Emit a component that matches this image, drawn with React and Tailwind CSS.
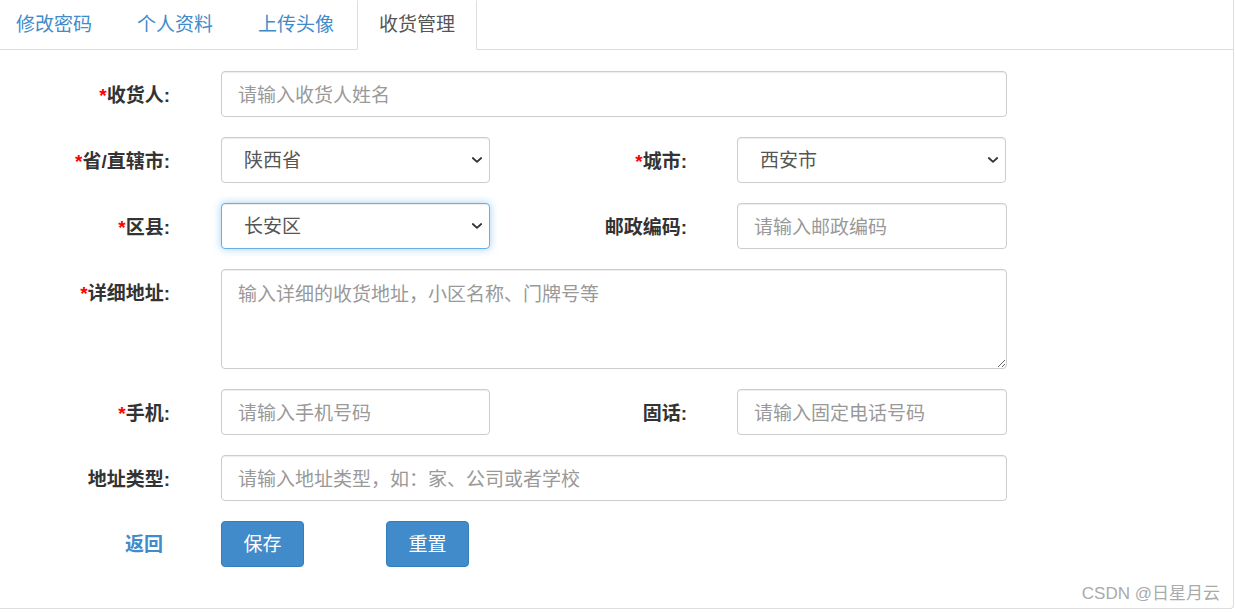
import React from 'react';

const tabs = ['修改密码', '个人资料', '上传头像', '收货管理'];

const inputCls =
  'h-[46px] border border-[#ccc] rounded-[4px] px-[16px] pt-[3px] text-[19px] text-[#555] bg-white outline-none placeholder:text-[#999] shadow-[inset_0_1px_1px_rgba(0,0,0,0.075)]';

const Label = ({ required, children, className = 'w-[170px]' }) => (
  <label className={`${className} shrink-0 text-right font-bold text-[19px] leading-[50px] text-[#333]`}>
    {required && <span className="text-[#f00]">*</span>}
    {children}:
  </label>
);

const Select = ({ value, focused }) => (
  <div className="relative w-[269px] shrink-0">
    <select
      defaultValue={value}
      className={`w-full h-[46px] appearance-none rounded-[4px] pl-[22px] pr-8 pt-[3px] text-[19px] text-[#555] bg-white outline-none border ${
        focused
          ? 'border-[#66afe9] shadow-[inset_0_1px_1px_rgba(0,0,0,0.075),0_0_8px_rgba(102,175,233,0.6)]'
          : 'border-[#ccc] shadow-[inset_0_1px_1px_rgba(0,0,0,0.075)]'
      }`}
    >
      <option>{value}</option>
    </select>
    <svg
      className="absolute right-[7px] top-1/2 -translate-y-1/2 pointer-events-none"
      width="12"
      height="8"
      viewBox="0 0 12 8"
      fill="none"
    >
      <path d="M1.8 2 L6 5.8 L10.2 2" stroke="#333" strokeWidth="1.8" strokeLinecap="round" strokeLinejoin="round" />
    </svg>
  </div>
);

export default function App() {
  return (
    <div className="w-[1234px] h-[609px] bg-white relative border-r border-b border-[#ddd] rounded-br-[4px] font-['Liberation_Sans','Noto_Sans_CJK_SC',sans-serif] overflow-hidden">
      {/* tabs */}
      <ul className="flex h-[50px] border-b border-[#ddd] ml-[-6px]">
        {tabs.map((t, i) => {
          const active = i === tabs.length - 1;
          return (
            <li key={t} className="-mb-px mr-[1px]">
              <a
                href="#"
                className={`block h-[50px] px-[21px] leading-[48px] text-[19px] border ${
                  active
                    ? 'border-[#ddd] border-b-white border-t-transparent bg-white text-[#555]'
                    : 'border-transparent text-[#428bca]'
                }`}
              >
                {t}
              </a>
            </li>
          );
        })}
      </ul>

      {/* form */}
      <form className="flex flex-col gap-[20px] pt-[21px]">
        <div className="flex items-start h-[46px]">
          <Label required>收货人</Label>
          <input className={`${inputCls} ml-[51px] w-[786px]`} placeholder="请输入收货人姓名" />
        </div>

        <div className="flex items-start h-[46px]">
          <Label required>省/直辖市</Label>
          <div className="ml-[51px]">
            <Select value="陕西省" />
          </div>
          <Label required className="w-[197px]">城市</Label>
          <div className="ml-[50px]">
            <Select value="西安市" />
          </div>
        </div>

        <div className="flex items-start h-[46px]">
          <Label required>区县</Label>
          <div className="ml-[51px]">
            <Select value="长安区" focused />
          </div>
          <Label className="w-[197px]">邮政编码</Label>
          <input className={`${inputCls} ml-[50px] w-[270px]`} placeholder="请输入邮政编码" />
        </div>

        <div className="flex items-start h-[100px]">
          <Label required>详细地址</Label>
          <textarea
            className="ml-[51px] w-[786px] h-[100px] border border-[#ccc] rounded-[4px] px-[16px] pt-[11px] text-[19px] leading-[27px] text-[#555] outline-none placeholder:text-[#999] shadow-[inset_0_1px_1px_rgba(0,0,0,0.075)]"
            placeholder="输入详细的收货地址，小区名称、门牌号等"
          />
        </div>

        <div className="flex items-start h-[46px]">
          <Label required>手机</Label>
          <input className={`${inputCls} ml-[51px] w-[269px]`} placeholder="请输入手机号码" />
          <Label className="w-[197px]">固话</Label>
          <input className={`${inputCls} ml-[50px] w-[270px]`} placeholder="请输入固定电话号码" />
        </div>

        <div className="flex items-start h-[46px]">
          <Label>地址类型</Label>
          <input className={`${inputCls} ml-[51px] w-[786px]`} placeholder="请输入地址类型，如：家、公司或者学校" />
        </div>

        <div className="flex items-center h-[46px]">
          <a href="#" className="w-[170px] shrink-0 text-right pr-[7px] pt-[3px] font-bold text-[19px] text-[#428bca]">
            返回
          </a>
          <button
            type="button"
            className="ml-[51px] w-[83px] h-[46px] pt-[3px] bg-[#428bca] border border-[#357ebd] rounded-[4px] text-white text-[19px]"
          >
            保存
          </button>
          <button
            type="button"
            className="ml-[82px] w-[83px] h-[46px] pt-[3px] bg-[#428bca] border border-[#357ebd] rounded-[4px] text-white text-[19px]"
          >
            重置
          </button>
        </div>
      </form>

      {/* watermark */}
      <div className="absolute right-[13px] bottom-[4px] text-[17px] text-[#aaa] leading-[20px]">CSDN @日星月云</div>
    </div>
  );
}
